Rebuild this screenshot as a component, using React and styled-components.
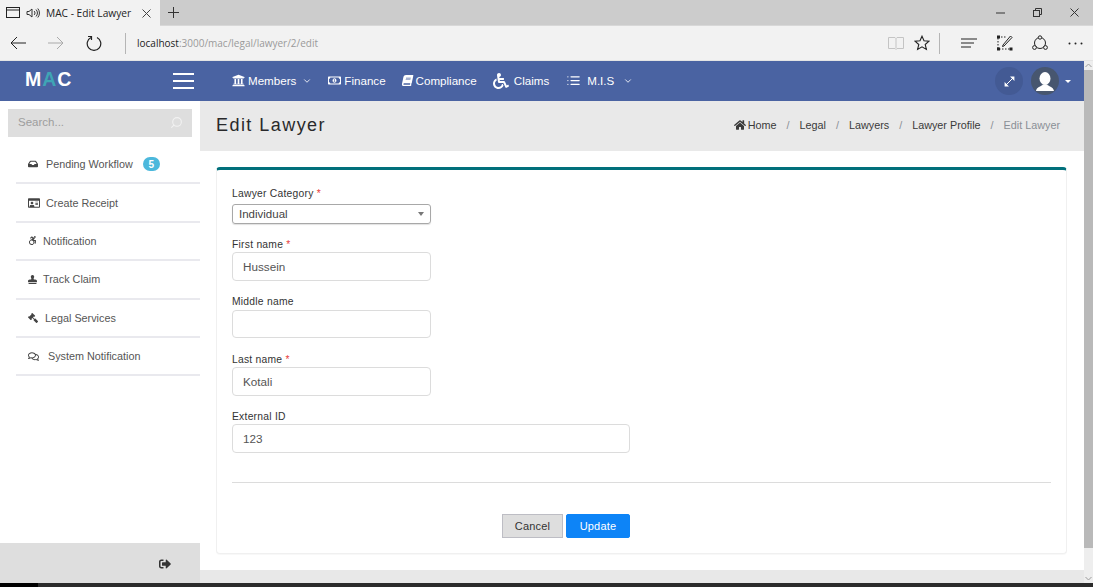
import React from 'react'
import styled, { createGlobalStyle } from 'styled-components'
import {
  FaUniversity, FaBook, FaWheelchair, FaInbox, FaAccessibleIcon, FaStamp,
  FaGavel, FaHome, FaRegMoneyBillAlt, FaRegComments, FaRegIdCard, FaSignOutAlt,
} from 'react-icons/fa'
import { FiChevronDown, FiSearch, FiList } from 'react-icons/fi'

const GlobalStyle = createGlobalStyle`
  html, body { margin: 0; padding: 0; height: 100%; overflow: hidden; }
  body { font-family: "Liberation Sans", Arial, sans-serif; background: #fff; }
  * { box-sizing: border-box; }
`

const Screen = styled.div`
  width: 1093px;
  height: 587px;
  display: flex;
  flex-direction: column;
  overflow: hidden;
`

const TabStrip = styled.div`
  height: 26px;
  flex: none;
  display: flex;
  align-items: stretch;
  background: #cccccc;
  border-bottom: 1px solid #d8d8d8;
`

const ActiveTab = styled.div`
  width: 160px;
  height: 26px;
  display: flex;
  align-items: center;
  padding-left: 6px;
  background: #f2f2f2;
  color: #222;
  font-family: "Open Sans", sans-serif;
  font-size: 10.2px;
`

const TabTitle = styled.span`
  margin-left: 6px;
  width: 96px;
  white-space: nowrap;
`

const IconGap = styled.span`
  width: 6px;
`

const NewTab = styled.div`
  width: 26px;
  display: flex;
  align-items: center;
  justify-content: center;
`

const WindowButtons = styled.div`
  margin-left: auto;
  display: flex;
  align-items: center;
  gap: 28px;
  padding-right: 14px;
`

const AddressBar = styled.div`
  height: 35px;
  flex: none;
  display: flex;
  align-items: center;
  background: #f2f2f2;
  border-bottom: 1px solid #e4e4e4;
  padding-left: 10px;
`

const NavIcons = styled.div`
  display: flex;
  align-items: center;
  gap: 22px;
  margin-right: 23px;
`

const Divider = styled.div`
  width: 1px;
  height: 21px;
  background: #b5b5b5;
  margin-right: ${p => p.$mr || 0}px;
`

const Url = styled.div`
  margin-left: 11px;
  font-family: "Open Sans", sans-serif;
  font-size: 10px;
  color: #9a9a9a;
  b { font-weight: 400; color: #222; }
`

const BrowserTools = styled.div`
  margin-left: auto;
  display: flex;
  align-items: center;
  padding-right: 6px;
`

const ToolSlot = styled.div`
  display: flex;
  align-items: center;
  justify-content: center;
  width: ${p => p.$w}px;
`

const Viewport = styled.div`
  flex: 1;
  min-height: 0;
  display: flex;
`

const Page = styled.div`
  flex: 1;
  min-width: 0;
  display: flex;
  flex-direction: column;
`

const Scrollbar = styled.div`
  width: 9px;
  flex: none;
  display: flex;
  flex-direction: column;
  background: #eeeeee;
  color: #9c9c9c;
`

const ScrollArrow = styled.div`
  height: 9px;
  display: flex;
  align-items: center;
  justify-content: center;
  margin-top: ${p => (p.$end ? 'auto' : '0')};
`

const ScrollThumb = styled.div`
  height: 478px;
  background: #b9b9b9;
`

const Header = styled.header`
  height: 40px;
  flex: none;
  display: flex;
  align-items: center;
  background: #4a63a2;
  color: #fff;
`

const Logo = styled.div`
  width: 173px;
  padding: 0 0 3px 25px;
  font-size: 19.5px;
  font-weight: 700;
  letter-spacing: 1px;
  span { color: #3fa5b5; }
`

const Burger = styled.div`
  width: 21px;
  height: 16px;
  display: flex;
  flex-direction: column;
  justify-content: space-between;
  margin-right: 38px;
  i { display: block; height: 2px; background: #fff; }
`

const TopNav = styled.nav`
  display: flex;
  align-items: center;
  padding-bottom: 1px;
  font-size: 11.6px;
`

const TopItem = styled.div`
  display: flex;
  align-items: center;
  gap: 3px;
  margin-right: ${p => p.$mr}px;
  white-space: nowrap;
  svg { flex: none; }
`

const HeaderRight = styled.div`
  margin-left: auto;
  display: flex;
  align-items: center;
  gap: 8px;
  padding-right: 13px;
`

const RoundButton = styled.div`
  width: 28px;
  height: 28px;
  border-radius: 50%;
  background: ${p => (p.$dark ? '#47566f' : '#435a94')};
  display: flex;
  align-items: center;
  justify-content: center;
  overflow: hidden;
`

const Caret = styled.div`
  width: 0;
  height: 0;
  margin-left: -2px;
  border-left: 3.5px solid transparent;
  border-right: 3.5px solid transparent;
  border-top: 3.5px solid #fff;
`

const Body = styled.div`
  flex: 1;
  min-height: 0;
  display: flex;
`

const Sidebar = styled.aside`
  width: 200px;
  flex: none;
  display: flex;
  flex-direction: column;
  background: #fff;
`

const SearchBox = styled.div`
  height: 28px;
  margin: 8px 8px 9px;
  padding: 0 9px 2px 10px;
  display: flex;
  align-items: center;
  justify-content: space-between;
  background: #dedede;
  color: #9d9d9d;
  font-size: 11.5px;
  svg { transform: scaleX(-1); color: #f2f2f2; }
`

const Menu = styled.ul`
  list-style: none;
  margin: 0 0 0 16px;
  padding: 0;
  flex: 1;
`

const MenuItem = styled.li`
  height: 38.4px;
  padding-left: 12px;
  display: flex;
  align-items: center;
  border-bottom: 2px solid #e9e9ee;
  color: #555;
  font-size: 10.8px;
  svg { flex: none; color: #444; margin-right: ${p => p.$gap}px; }
`

const FlippedGavel = styled(FaGavel)`
  transform: scaleX(-1);
`

const Badge = styled.span`
  margin-left: 10px;
  width: 17px;
  height: 14px;
  border-radius: 8px;
  background: #4cb8dc;
  color: #fff;
  font-size: 10px;
  font-weight: 700;
  display: flex;
  align-items: center;
  justify-content: center;
`

const SidebarFoot = styled.div`
  height: 40px;
  flex: none;
  background: #dedede;
  display: flex;
  align-items: center;
  justify-content: flex-end;
  padding: 1px 29px 0 0;
  color: #333;
`

const Main = styled.main`
  flex: 1;
  min-width: 0;
  display: flex;
  flex-direction: column;
  background: #fff;
`

const PageHead = styled.div`
  height: 50px;
  flex: none;
  display: flex;
  align-items: center;
  justify-content: space-between;
  padding: 0 24px 2px 16px;
  background: #e9e9e9;
`

const Title = styled.h1`
  margin: 0;
  font-size: 18px;
  font-weight: 400;
  letter-spacing: 1.45px;
  color: #29292b;
`

const Crumbs = styled.div`
  display: flex;
  align-items: center;
  font-size: 10.8px;
  color: #3a3a3a;
`

const Crumb = styled.span`
  display: flex;
  align-items: center;
  gap: 2px;
  color: ${p => (p.$current ? '#8a8f96' : '#3a3a3a')};
`

const Slash = styled.span`
  margin: 0 10px 0 10px;
  color: #8a8f96;
`

const Content = styled.div`
  flex: 1;
  min-height: 0;
  padding: 16px 17px 16px 16px;
`

const Card = styled.section`
  height: 387px;
  padding: 19px 15px 0;
  background: #fff;
  border: 1px solid #f0f0f0;
  border-top: 3px solid #01707b;
  border-radius: 4px;
  box-shadow: 0 1px 1px rgba(0, 0, 0, 0.03);
`

const Field = styled.div`
  display: flex;
  flex-direction: column;
  margin-bottom: ${p => p.$mb}px;
  width: ${p => p.$w}px;
`

const Label = styled.label`
  height: 10px;
  line-height: 10px;
  font-size: 10.3px;
  letter-spacing: 0.25px;
  color: #333;
  margin-bottom: ${p => p.$mb}px;
  span { color: #e84040; }
`

const FakeSelect = styled.div`
  height: 20px;
  display: flex;
  align-items: center;
  justify-content: space-between;
  padding: 0 6px 1px;
  border: 1px solid #a8a8a8;
  border-radius: 3px;
  box-shadow: 0 1px 1px rgba(0, 0, 0, 0.12);
  font-size: 11.5px;
  color: #444;
  i {
    width: 0;
    height: 0;
    border-left: 3.5px solid transparent;
    border-right: 3.5px solid transparent;
    border-top: 4px solid #777;
  }
`

const Input = styled.div`
  height: ${p => p.$h}px;
  display: flex;
  align-items: center;
  padding: 0 10px 1px;
  border: 1px solid #dcdcdc;
  border-radius: 4px;
  font-size: 11.7px;
  color: #555;
`

const Rule = styled.hr`
  margin: 29px 0 31px;
  border: 0;
  border-top: 1px solid #dcdcdc;
`

const Actions = styled.div`
  display: flex;
  gap: 3px;
  padding-left: 270px;
`

const Button = styled.button`
  height: 24px;
  width: ${p => p.$w}px;
  padding: 0;
  font: 11px "Liberation Sans", Arial, sans-serif;
  letter-spacing: 0.2px;
  color: ${p => (p.$primary ? '#fff' : '#333')};
  background: ${p => (p.$primary ? '#0d84f7' : '#dedede')};
  border: 1px solid ${p => (p.$primary ? '#0d84f7' : '#bdbdc4')};
  border-radius: ${p => (p.$primary ? '2px' : '0')};
`

const MainFoot = styled.div`
  height: 13px;
  flex: none;
  background: #e8e8e8;
`

const Taskbar = styled.div`
  height: 4px;
  flex: none;
  display: flex;
  background: #000;
  i { display: block; width: 38px; background: #000; }
  b { display: block; flex: 1; background: #2b2b2b; }
`

const Glyph = ({ w = 16, h = 16, vb = '0 0 16 16', children, color = '#222', sw = 1 }) => (
  <svg width={w} height={h} viewBox={vb} fill="none" stroke={color} strokeWidth={sw}>{children}</svg>
)

export default function App() {
  return (
    <Screen>
      <GlobalStyle />
      <TabStrip>
        <ActiveTab>
          <Glyph w={14} h={12} vb="0 0 14 12"><rect x=".5" y=".5" width="13" height="10" /><path d="M.5 3h13" /></Glyph>
          <IconGap />
          <Glyph w={14} h={12} vb="0 0 14 12" color="#333"><path d="M1 4.500h2L6 2v8L3 7.500H1z" /><path d="M8 4a2.500 2.500 0 0 1 0 4M10 2.500a5 5 0 0 1 0 7M11.800 1.500a7 7 0 0 1 0 9" /></Glyph>
          <TabTitle>MAC - Edit Lawyer</TabTitle>
          <Glyph w={9} h={9} vb="0 0 9 9" color="#444"><path d="M.5.5l8 8M8.500.5l-8 8" /></Glyph>
        </ActiveTab>
        <NewTab>
          <Glyph w={11} h={11} vb="0 0 11 11" color="#333"><path d="M5.500 0v11M0 5.500h11" /></Glyph>
        </NewTab>
        <WindowButtons>
          <Glyph w={9} h={2} vb="0 0 9 2" color="#333"><path d="M0 1h9" /></Glyph>
          <Glyph w={9} h={9} vb="0 0 9 9" color="#333"><rect x=".5" y="2.500" width="6" height="6" /><path d="M2.500 2.500v-2h6v6h-2" /></Glyph>
          <Glyph w={9} h={9} vb="0 0 9 9" color="#333"><path d="M.5.5l8 8M8.500.5l-8 8" /></Glyph>
        </WindowButtons>
      </TabStrip>

      <AddressBar>
        <NavIcons>
          <Glyph w={16} h={14} vb="0 0 16 14"><path d="M16 7H1M7 1 1 7l6 6" /></Glyph>
          <Glyph w={16} h={14} vb="0 0 16 14" color="#aaa"><path d="M0 7h15M9 1l6 6-6 6" /></Glyph>
          <Glyph w={16} h={16} sw={1.2}><path d="M5 2.500a6.800 6.800 0 1 0 6 0" /><path d="M2 1.500h3.500V5" /></Glyph>
        </NavIcons>
        <Divider />
        <Url><b>localhost</b>:3000/mac/legal/lawyer/2/edit</Url>
        <BrowserTools>
          <ToolSlot $w={18}>
            <Glyph w={16} h={14} vb="0 0 16 14" color="#c4c4c4"><path d="M.5 1.500h6.500l1 1 1-1h6.500v11H9l-1 1-1-1H.5zM8 2.500v10" /></Glyph>
          </ToolSlot>
          <ToolSlot $w={34}>
            <Glyph w={16} h={16} color="#222" sw={1.1}><path d="M8 1.200l2 4.600 5 .4-3.800 3.300 1.200 4.900L8 11.800l-4.400 2.600 1.200-4.900L1 6.200l5-.4z" /></Glyph>
          </ToolSlot>
          <Divider $mr={5} />
          <ToolSlot $w={48}>
            <Glyph w={16} h={10} vb="0 0 16 10"><path d="M0 1h16M0 5h13M0 9h10" /></Glyph>
          </ToolSlot>
          <ToolSlot $w={24}>
            <Glyph w={16} h={16}><path d="M1 3v11h12M4 2h5" strokeDasharray="1.500 1.500" /><rect x=".5" y="1" width="2" height="2" fill="#222" /><rect x=".5" y="13" width="2" height="2" fill="#222" /><rect x="13" y="13" width="2" height="2" fill="#222" /><path d="M6 10l-.5 1.500L7 11l8-8.500L13.500 1z" /></Glyph>
          </ToolSlot>
          <ToolSlot $w={46}>
            <Glyph w={16} h={16}><circle cx="8" cy="8" r="5.500" /><circle cx="8" cy="2.500" r="1.700" fill="#f2f2f2" /><circle cx="2.500" cy="12.500" r="1.900" fill="#f2f2f2" /><circle cx="13.500" cy="12.500" r="1.900" fill="#f2f2f2" /></Glyph>
          </ToolSlot>
          <ToolSlot $w={24}>
            <Glyph w={15} h={3} vb="0 0 15 3" color="none"><circle cx="1.500" cy="1.500" r="1" fill="#222" /><circle cx="7.500" cy="1.500" r="1" fill="#222" /><circle cx="13.500" cy="1.500" r="1" fill="#222" /></Glyph>
          </ToolSlot>
        </BrowserTools>
      </AddressBar>

      <Viewport>
        <Page>
          <Header>
            <Logo>M<span>A</span>C</Logo>
            <Burger><i /><i /><i /></Burger>
            <TopNav>
              <TopItem $mr={16}><FaUniversity size={13} />Members<FiChevronDown size={10} style={{ marginLeft: 3 }} /></TopItem>
              <TopItem $mr={16}><FaRegMoneyBillAlt size={13} />Finance</TopItem>
              <TopItem $mr={16}><FaBook size={11} style={{ transform: 'skewX(-12deg)' }} />Compliance</TopItem>
              <TopItem $mr={17}><FaWheelchair size={16} style={{ marginRight: 2 }} />Claims</TopItem>
              <TopItem $mr={0}><FiList size={15} style={{ marginRight: 3 }} />M.I.S<FiChevronDown size={10} style={{ marginLeft: 6 }} /></TopItem>
            </TopNav>
            <HeaderRight>
              <RoundButton>
                <Glyph w={11} h={11} vb="0 0 11 11" color="#fff"><path d="M1 10l9-9" /><path d="M6 .6h4.400V5zM.6 6v4.400H5z" fill="#fff" stroke="none" /></Glyph>
              </RoundButton>
              <RoundButton $dark>
                <svg width="28" height="28" viewBox="0 0 28 28" fill="#fff"><ellipse cx="14" cy="11.500" rx="5.500" ry="6.500" /><path d="M5 24c.5-4 5-4.500 7-6.500h4c2 2 6.500 2.500 7 6.500z" /></svg>
              </RoundButton>
              <Caret />
            </HeaderRight>
          </Header>

          <Body>
            <Sidebar>
              <SearchBox>Search...<FiSearch size={13} /></SearchBox>
              <Menu>
                <MenuItem $gap={8}><FaInbox size={10} />Pending Workflow<Badge>5</Badge></MenuItem>
                <MenuItem $gap={6}><FaRegIdCard size={12} />Create Receipt</MenuItem>
                <MenuItem $gap={6}><FaAccessibleIcon size={9} />Notification</MenuItem>
                <MenuItem $gap={6}><FaStamp size={9} />Track Claim</MenuItem>
                <MenuItem $gap={7}><FlippedGavel size={10} />Legal Services</MenuItem>
                <MenuItem $gap={9}><FaRegComments size={11} />System Notification</MenuItem>
              </Menu>
              <SidebarFoot><FaSignOutAlt size={12} /></SidebarFoot>
            </Sidebar>

            <Main>
              <PageHead>
                <Title>Edit Lawyer</Title>
                <Crumbs>
                  <Crumb><FaHome size={12} />Home</Crumb><Slash>/</Slash>
                  <Crumb>Legal</Crumb><Slash>/</Slash>
                  <Crumb>Lawyers</Crumb><Slash>/</Slash>
                  <Crumb>Lawyer Profile</Crumb><Slash>/</Slash>
                  <Crumb $current>Edit Lawyer</Crumb>
                </Crumbs>
              </PageHead>
              <Content>
                <Card>
                  <Field $w={199} $mb={16}>
                    <Label $mb={5}>Lawyer Category <span>*</span></Label>
                    <FakeSelect>Individual<i /></FakeSelect>
                  </Field>
                  <Field $w={199} $mb={16}>
                    <Label $mb={2}>First name <span>*</span></Label>
                    <Input $h={29}>Hussein</Input>
                  </Field>
                  <Field $w={199} $mb={17}>
                    <Label $mb={3}>Middle name</Label>
                    <Input $h={28} />
                  </Field>
                  <Field $w={199} $mb={16}>
                    <Label $mb={2}>Last name <span>*</span></Label>
                    <Input $h={29}>Kotali</Input>
                  </Field>
                  <Field $w={398} $mb={0}>
                    <Label $mb={2}>External ID</Label>
                    <Input $h={29}>123</Input>
                  </Field>
                  <Rule />
                  <Actions>
                    <Button $w={61}>Cancel</Button>
                    <Button $primary $w={64}>Update</Button>
                  </Actions>
                </Card>
              </Content>
              <MainFoot />
            </Main>
          </Body>
        </Page>
        <Scrollbar>
          <ScrollArrow><Glyph w={7} h={5} vb="0 0 7 5" color="#9c9c9c"><path d="M.5 4l3-3 3 3" /></Glyph></ScrollArrow>
          <ScrollThumb />
          <ScrollArrow $end><Glyph w={7} h={5} vb="0 0 7 5" color="#9c9c9c"><path d="M.5 1l3 3 3-3" /></Glyph></ScrollArrow>
        </Scrollbar>
      </Viewport>
      <Taskbar><i /><b /></Taskbar>
    </Screen>
  )
}
